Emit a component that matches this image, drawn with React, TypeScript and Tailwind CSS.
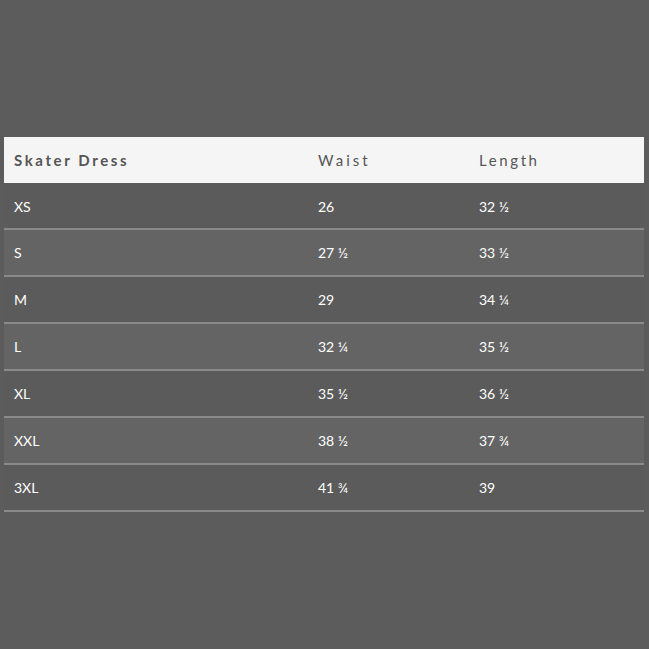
import React from "react";

type Row = { size: string; waist: string; length: string };

const rows: Row[] = [
  { size: "XS", waist: "26", length: "32 ½" },
  { size: "S", waist: "27 ½", length: "33 ½" },
  { size: "M", waist: "29", length: "34 ¼" },
  { size: "L", waist: "32 ¼", length: "35 ½" },
  { size: "XL", waist: "35 ½", length: "36 ½" },
  { size: "XXL", waist: "38 ½", length: "37 ¾" },
  { size: "3XL", waist: "41 ¾", length: "39" },
];

const App: React.FC = () => {
  return (
    <main className="min-h-[649px] w-[649px] bg-[#5c5c5c] pt-[137px] pl-[4px] font-['Lato',sans-serif]">
      <div className="w-[640px]">
        {/* header */}
        <div className="grid h-[46px] grid-cols-[304px_161px_175px] items-center bg-[#f5f5f5] text-[15px] text-[#555]">
          <div className="pl-[10px] font-bold tracking-[2.6px]">Skater Dress</div>
          <div className="pl-[10px] tracking-[3px]">Waist</div>
          <div className="pl-[10px] tracking-[2.6px]">Length</div>
        </div>
        {rows.map((r, i) => (
          <div
            key={r.size}
            className={`grid h-[47px] grid-cols-[304px_161px_175px] items-center border-b-2 border-[#8a8a8a] text-[14px] text-white ${
              i === 0 ? "h-[47px] pt-[2px]" : ""
            } ${i % 2 === 1 ? "bg-[#646464]" : "bg-[#5b5b5b]"}`}
          >
            <div className="pl-[10px]">{r.size}</div>
            <div className="pl-[10px]">{r.waist}</div>
            <div className="pl-[10px]">{r.length}</div>
          </div>
        ))}
      </div>
    </main>
  );
};

export default App;
